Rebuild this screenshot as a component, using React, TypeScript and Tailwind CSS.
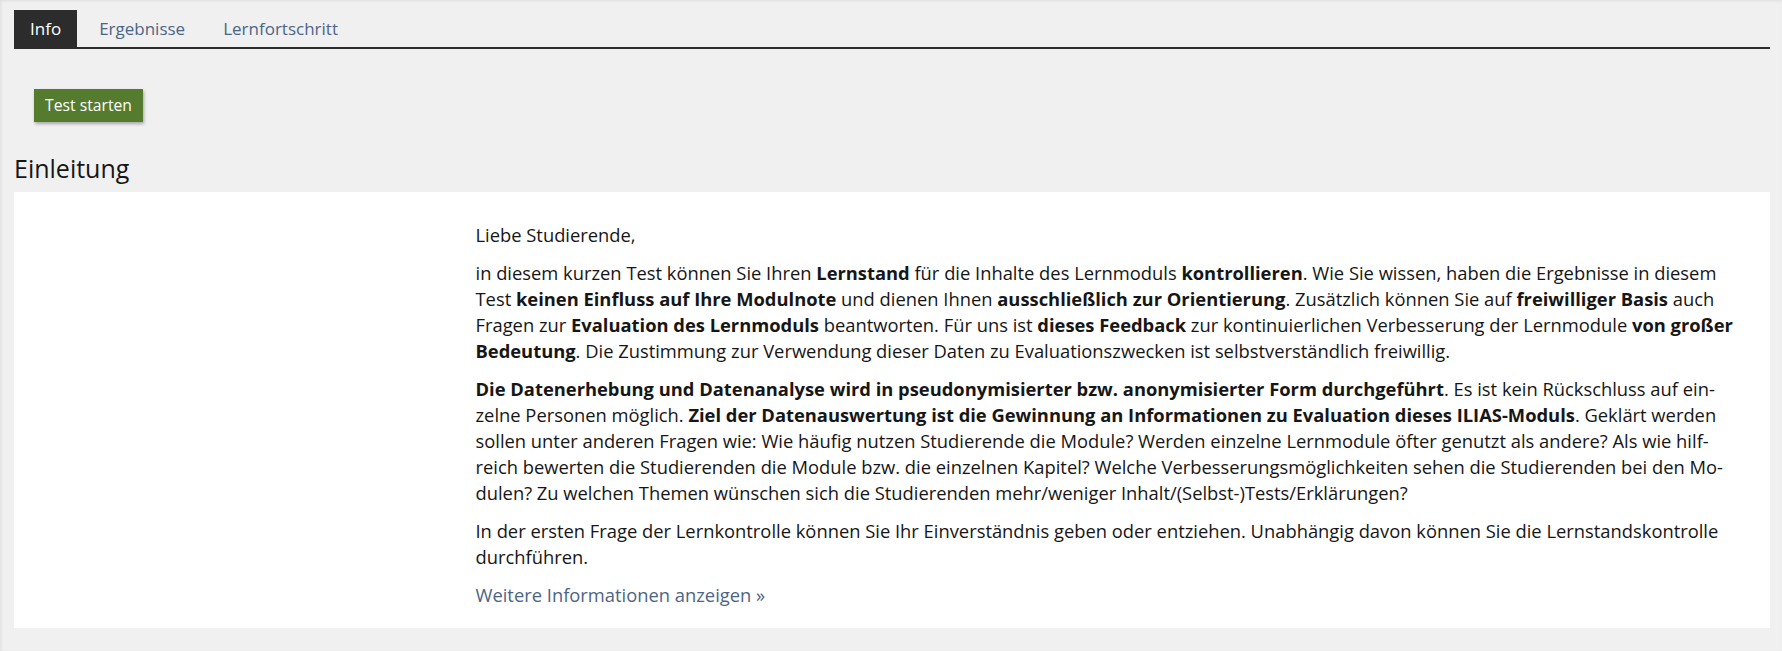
const tabs = [
  { label: "Info", active: true },
  { label: "Ergebnisse", active: false },
  { label: "Lernfortschritt", active: false },
];

const Tabs = () => (
  <div className="flex border-b-2 border-[#2c2c2c]">
    {tabs.map(({ label, active }) => (
      <a
        key={label}
        href="#"
        className={
          active
            ? "h-[37px] flex items-center px-[16px] bg-[#2c2c2c] text-white"
            : "h-[37px] flex items-center pl-[22px] pr-[16px] text-[#4c6586]"
        }
      >
        {label}
      </a>
    ))}
  </div>
);

export default function App() {
  return (
    <div
      className="min-h-screen bg-[#f0f0f0] pl-[14px] pr-[12px] pt-[10px] text-[#161616] shadow-[inset_0_2px_2px_rgba(0,0,0,0.04),inset_2px_0_2px_rgba(0,0,0,0.04)]"
      style={{ fontFamily: '"Open Sans", "Noto Sans", sans-serif' }}
    >
      <div className="text-[17px]">
        <Tabs />
      </div>

      <div className="pt-[40px] pl-[20px]">
        <button className="h-[33px] w-[109px] bg-[#557b2e] text-white text-[15.7px] shadow-[1px_2px_3px_rgba(0,0,0,0.3)]">
          Test starten
        </button>
      </div>

      <h2 className="mt-[31px] mb-[9px] text-[25px] leading-[30px] font-normal">
        Einleitung
      </h2>

      <section className="bg-white grid grid-cols-4 px-[15px] pt-[30px] pb-[20px] text-[18.35px] leading-[26px]">
        <div />
        <div className="col-span-3 px-[15px]" lang="de">
          <p className="mb-[12px]">Liebe Studierende,</p>
          <p className="mb-[12px]">
            in diesem kurzen Test können Sie Ihren <b>Lernstand</b> für die Inhalte des Lernmoduls{" "}
            <b>kontrollieren</b>. Wie Sie wissen, haben die Ergebnisse in diesem Test{" "}
            <b>keinen Einfluss auf Ihre Modulnote</b> und dienen Ihnen{" "}
            <b>ausschließlich zur Orientierung</b>. Zusätzlich können Sie auf{" "}
            <b>freiwilliger Basis</b> auch Fragen zur <b>Evaluation des Lernmoduls</b> beantworten.
            Für uns ist <b>dieses Feedback</b> zur kontinuierlichen Verbesserung der Lernmodule{" "}
            <b>von großer Bedeutung</b>. Die Zustimmung zur Verwendung dieser Daten zu
            Evaluationszwecken ist selbstverständlich freiwillig.
          </p>
          <p className="mb-[12px]">
            <b>
              Die Datenerhebung und Datenanalyse wird in pseudonymisierter bzw. anonymisierter Form
              durchgeführt
            </b>
            . Es ist kein Rückschluss auf ein{"\u00AD"}zelne Personen möglich.{" "}
            <b>
              Ziel der Datenauswertung ist die Gewinnung an Informationen zu Evaluation dieses
              ILIAS-Moduls
            </b>
            . Geklärt werden sollen unter anderen Fragen wie: Wie häufig nutzen Studierende die
            Module? Werden einzelne Lernmodule öfter genutzt als andere? Als wie hilf{"\u00AD"}reich
            bewerten die Studierenden die Module bzw. die einzelnen Kapitel? Welche
            Verbesserungsmöglichkeiten sehen die Studierenden bei den Mo{"\u00AD"}dulen? Zu welchen
            Themen wünschen sich die Studierenden mehr/weniger Inhalt/(Selbst-)Tests/Erklärungen?
          </p>
          <p className="mb-[12px]">
            In der ersten Frage der Lernkontrolle können Sie Ihr Einverständnis geben oder entziehen.
            Unabhängig davon können Sie die Lernstandskontrolle durchführen.
          </p>
          <a href="#" className="text-[#4c6586]">
            Weitere Informationen anzeigen »
          </a>
        </div>
      </section>
    </div>
  );
}
